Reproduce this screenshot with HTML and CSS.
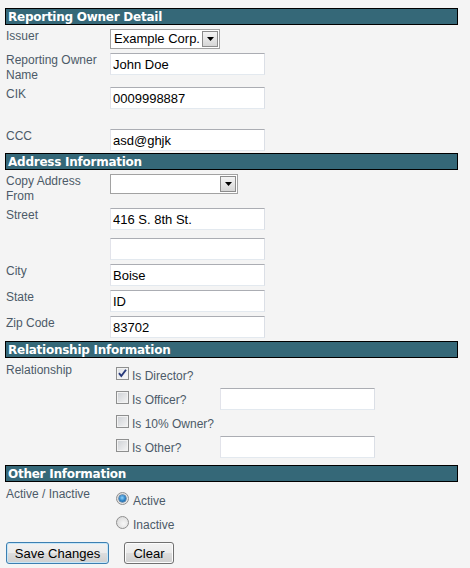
FILE: index.html
```html
<!DOCTYPE html>
<html>
<head>
<meta charset="utf-8">
<title>Reporting Owner Detail</title>
<link rel="stylesheet" href="styles.css">
</head>
<body>
<form class="form">
  <div class="section-title">Reporting Owner Detail</div>
  <div class="row row-first h24">
    <div class="row-label">Issuer</div>
    <div class="field">
      <span class="select w110">
        <select class="select-el"><option>Example Corp.</option></select>
        <span class="select-btn"><svg width="7" height="4" viewBox="0 0 7 4"><path d="M0 0h7L3.5 4z" fill="#000"/></svg></span>
      </span>
    </div>
  </div>
  <div class="row h34">
    <div class="row-label">Reporting Owner Name</div>
    <div class="field"><input class="text" type="text" value="John Doe"></div>
  </div>
  <div class="row h42">
    <div class="row-label">CIK</div>
    <div class="field"><input class="text" type="text" value="0009998887"></div>
  </div>
  <div class="row h24">
    <div class="row-label">CCC</div>
    <div class="field"><input class="text" type="text" value="asd@ghjk"></div>
  </div>

  <div class="section-title">Address Information</div>
  <div class="row row-first h34">
    <div class="row-label">Copy Address From</div>
    <div class="field">
      <span class="select w128">
        <select class="select-el"><option></option></select>
        <span class="select-btn"><svg width="7" height="4" viewBox="0 0 7 4"><path d="M0 0h7L3.5 4z" fill="#000"/></svg></span>
      </span>
    </div>
  </div>
  <div class="row h30">
    <div class="row-label">Street</div>
    <div class="field"><input class="text" type="text" value="416 S. 8th St."></div>
  </div>
  <div class="row h26">
    <div class="row-label"></div>
    <div class="field"><input class="text" type="text" value=""></div>
  </div>
  <div class="row h26">
    <div class="row-label">City</div>
    <div class="field"><input class="text" type="text" value="Boise"></div>
  </div>
  <div class="row h26">
    <div class="row-label">State</div>
    <div class="field"><input class="text" type="text" value="ID"></div>
  </div>
  <div class="row h25">
    <div class="row-label">Zip Code</div>
    <div class="field"><input class="text" type="text" value="83702"></div>
  </div>

  <div class="section-title">Relationship Information</div>
  <div class="row row-group">
    <div class="row-label">Relationship</div>
    <div class="field options">
      <div class="option">
        <span class="cb checked"><svg width="11" height="11" viewBox="0 0 11 11"><path d="M2 5.2 L4.3 8 L9 1.8" fill="none" stroke="#27397a" stroke-width="1.9"/></svg></span>
        <span class="opt-text">Is Director?</span>
      </div>
      <div class="option">
        <span class="cb"></span>
        <span class="opt-text">Is Officer?</span>
        <input class="text opt-input" type="text" value="">
      </div>
      <div class="option">
        <span class="cb"></span>
        <span class="opt-text">Is 10% Owner?</span>
      </div>
      <div class="option">
        <span class="cb"></span>
        <span class="opt-text">Is Other?</span>
        <input class="text opt-input" type="text" value="">
      </div>
    </div>
  </div>

  <div class="section-title section-last">Other Information</div>
  <div class="row row-group2">
    <div class="row-label">Active / Inactive</div>
    <div class="field options">
      <div class="option">
        <span class="radio checked"><span class="dot"></span></span>
        <span class="opt-text rtext">Active</span>
      </div>
      <div class="option">
        <span class="radio"></span>
        <span class="opt-text rtext">Inactive</span>
      </div>
    </div>
  </div>

  <div class="buttons">
    <button type="button" class="btn btn-default">Save Changes</button>
    <button type="button" class="btn btn-clear">Clear</button>
  </div>
</form>
</body>
</html>
```

FILE: styles.css
```css
html, body {
  background: #f4f4f4;
}
body {
  margin: 8px 0 0 5px;
  font-family: "Liberation Sans", Arial, sans-serif;
  font-size: 12px;
  color: #4c5a68;
}
.form {
  width: 453px;
}
.section-title {
  height: 15px;
  border: 1px solid #000;
  background: #356878;
  color: #fff;
  font-family: "DejaVu Sans", Verdana, sans-serif;
  font-weight: bold;
  font-size: 12px;
  letter-spacing: -0.25px;
  line-height: 16px;
  padding-left: 2px;
  white-space: nowrap;
}
.section-last {
  margin-top: 6px;
}
.row {
  display: flex;
  align-items: flex-start;
}
.row-first {
  margin-top: 4px;
}
.h24 { height: 24px; }
.h25 { height: 25px; }
.h26 { height: 26px; }
.h30 { height: 30px; }
.h34 { height: 34px; }
.h42 { height: 42px; }
.row-label {
  width: 104px;
  padding-left: 1px;
  line-height: 15px;
  flex: none;
}
.field {
  flex: 1;
  display: flex;
}
.text {
  box-sizing: border-box;
  width: 155px;
  height: 22px;
  margin: 0;
  padding: 0 2px;
  border: 1px solid;
  border-color: #abadb3 #dbdfe6 #e3e9ef #e2e3ea;
  background: #fff;
  font-family: "Liberation Sans", Arial, sans-serif;
  font-size: 13px;
  color: #000;
  outline: none;
}
.select {
  box-sizing: border-box;
  display: inline-flex;
  height: 20px;
  border: 1px solid #a2a2a2;
  background: #fff;
}
.w110 { width: 110px; }
.w128 { width: 128px; }
.select-el {
  flex: 1;
  min-width: 0;
  -webkit-appearance: none;
  appearance: none;
  border: 0;
  margin: 0;
  padding: 0 0 0 3px;
  background: transparent;
  font-family: "Liberation Sans", Arial, sans-serif;
  font-size: 13px;
  color: #000;
  height: 18px;
  line-height: 18px;
  outline: none;
}
.select-btn {
  box-sizing: border-box;
  flex: none;
  width: 16px;
  height: 16px;
  margin: 1px 1px 1px 0;
  border: 1px solid #8c8c8c;
  background: linear-gradient(#f4f4f4, #e6e6e6 50%, #d6d6d6);
  display: flex;
  align-items: center;
  justify-content: center;
}
.row-group {
  margin-top: 5px;
}
.row-group2 {
  margin-top: 5px;
}
.options {
  flex-direction: column;
  padding-left: 6px;
}
.option {
  display: flex;
  align-items: flex-start;
  height: 24px;
}
.cb {
  box-sizing: border-box;
  flex: none;
  width: 13px;
  height: 13px;
  margin-top: 4px;
  border: 1px solid #8e8f8f;
  background: linear-gradient(135deg, #cdd0d4, #f5f5f5);
  box-shadow: inset 0 0 0 1px #f2f2f2;
  display: flex;
  align-items: center;
  justify-content: center;
}
.cb.checked {
  background: linear-gradient(135deg, #dcdfe4, #fafafa);
}
.opt-text {
  width: 88px;
  flex: none;
  padding-left: 3px;
  padding-top: 6px;
  line-height: 15px;
  white-space: nowrap;
}
.opt-input {
  margin-top: 1px;
}
.radio {
  box-sizing: border-box;
  flex: none;
  width: 13px;
  height: 13px;
  margin-top: 5px;
  border: 1px solid #8f8f8f;
  border-radius: 50%;
  background: radial-gradient(circle at 60% 60%, #f7f7f7, #d4d4d4);
  display: flex;
  align-items: center;
  justify-content: center;
}
.radio .dot {
  width: 7px;
  height: 7px;
  border-radius: 50%;
  background: radial-gradient(circle at 45% 40%, #8fd3fb, #2a7fc3 55%, #164e86);
  box-shadow: 0 0 0 0.5px #1c4f80;
}
.rtext {
  padding-left: 4px;
  padding-top: 7px;
}
.buttons {
  display: flex;
  gap: 15px;
  margin-top: 7px;
  padding-left: 1px;
}
.btn {
  box-sizing: border-box;
  height: 22px;
  margin: 0;
  padding: 0;
  border: 1px solid #707070;
  border-radius: 3px;
  background: linear-gradient(#f2f2f2, #ebebeb 50%, #dddddd 51%, #cfcfcf);
  box-shadow: inset 0 0 0 1px #fcfcfc;
  font-family: "Liberation Sans", Arial, sans-serif;
  font-size: 13px;
  color: #000;
  white-space: nowrap;
  text-align: center;
}
.btn-default {
  width: 103px;
  border-color: #3c7fb1;
  box-shadow: inset 0 0 0 1px #c6e6f8;
}
.btn-clear {
  width: 50px;
}
```
